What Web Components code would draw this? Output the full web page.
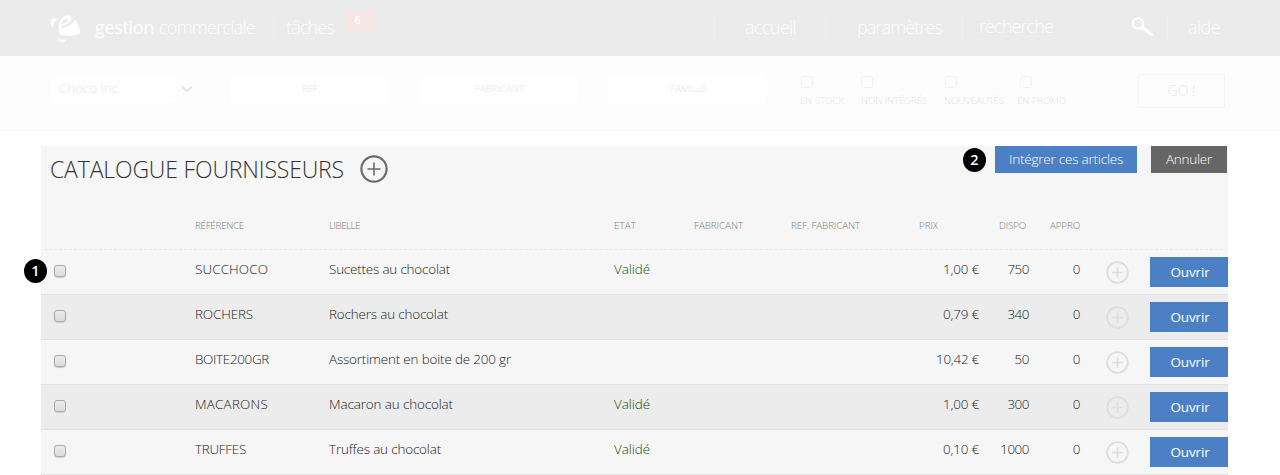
<!DOCTYPE html>
<html lang="fr">
<head>
<meta charset="utf-8">
<title>Catalogue fournisseurs</title>
<style>
html,body{margin:0;height:475px;overflow:hidden;background:#fefefe;font-family:"Open Sans","Noto Sans",sans-serif;font-weight:300}
</style>
</head>
<body>
<catalogue-page></catalogue-page>
<script>
const define = (name, html, ready) => customElements.define(name, class extends HTMLElement {
  connectedCallback() {
    if (this.shadowRoot) return;
    this.attachShadow({mode: 'open'}).innerHTML = typeof html === 'function' ? html(this) : html;
    if (ready) ready(this);
  }
});

// A label whose tracking is adjusted so that it occupies the width in "w".
define('fit-text', '<style>:host{display:block;white-space:pre;width:max-content;line-height:20px}</style><slot></slot>', el => {
  const w = +el.getAttribute('w'), n = [...el.textContent].length;
  if (w) el.style.letterSpacing = ((w - el.getBoundingClientRect().width) / n) + 'px';
});

define('plus-icon', el => `<style>:host{display:block;flex:none}svg{display:block}</style>
<svg width="${el.getAttribute('size')}" height="${el.getAttribute('size')}" viewBox="0 0 28 28" fill="none" stroke="currentColor">
<circle cx="14" cy="14" r="12.6" stroke-width="2.2"/><path d="M14 7.5v13M7.5 14h13" stroke-width="${el.getAttribute('bar') || 1.6}"/></svg>`);

define('check-box', `<style>:host{display:block;box-sizing:border-box;width:12px;height:12px;border:1px solid var(--line,#a9a9a9);border-radius:3px;background:var(--fill,linear-gradient(#ececec,#dcdcdc));box-shadow:var(--drop,0 1px 1px #d0d0d0)}</style>`);

define('step-badge', `<style>:host{position:absolute;width:23px;height:24px;border-radius:50%;background:#000;color:#fff;font-size:14.5px;font-weight:600;line-height:23px;text-align:center}</style><slot></slot>`);

define('action-button', `<style>:host{display:flex;align-items:center;justify-content:center;background:#4b81c4;color:#fff;font-size:13.5px;font-weight:400}</style><slot></slot>`);

define('top-bar', `<style>
:host{display:flex;box-sizing:border-box;height:56px;background:#ebebeb;color:#fdfdfd;font-size:18px;padding:17px 0 0 50px}
svg{display:block;flex:none}
.logo{margin:-3px 14px 0 0}
.g{font-weight:400;margin-right:5px}
i{width:1px;height:24px;background:#f0f0f0;flex:none;margin-top:-1px}
.task{margin:0 9px 0 12px}
.bubble{margin:-6px 343px 0 0}
</style>
<svg class="logo" width="31" height="30" viewBox="0 0 31 30" fill="#fff"><path d="M1 6Q4 3.5 8 4Q3.5 8 2.5 14Q0 10 1 6Z"/><path d="M9 15C9 6 13 1 18.500 1.500C22.500 2 22.500 6.500 17.500 9.500Q14 11.500 11 12.500V14C19 13.500 23.500 10 25 5.500C28 9.500 30 14 30 19C25 22.500 19 22 13.500 21.500C10 21 9 19 9 15ZM11 10.500C15 9.500 19.500 6.500 18 5C15.500 4 12 7 11 10.500Z"/><path d="M8 24.500C11 26 13 26 16.500 25.500C13.500 29 9.500 29.500 8 24.500Z"/></svg>
<fit-text class="g" w="59">gestion</fit-text><fit-text w="96">commerciale</fit-text>
<i style="margin-left:18px"></i><fit-text class="task" w="48">tâches</fit-text>
<svg class="bubble" width="31" height="28" viewBox="0 0 31 28"><path d="M2 1H30V20H19L13 27V20H2Z" fill="#f8e6e6"/><text x="14.500" y="13" text-anchor="middle" fill="#fff" font-size="10.500" font-weight="600">6</text></svg>
<i style="margin-left:-3px"></i><fit-text style="margin-left:30px" w="51">accueil</fit-text>
<i style="margin-left:29px"></i><fit-text style="margin-left:31px" w="85">paramètres</fit-text>
<i style="margin-left:20px"></i><fit-text style="margin:-1px 0 0 16px" w="74">recherche</fit-text>
<svg style="margin:-1px 12px 0 78px" width="24" height="22" viewBox="0 0 24 22" fill="none" stroke="#fff"><circle cx="7" cy="7.500" r="5.200" stroke-width="2.200"/><path d="M7 5.200q2.300.3 2.500 2.200" stroke-width="1"/><path d="M11.500 11.500L20.500 18.500" stroke-width="3" stroke-linecap="round"/></svg>
<i></i><fit-text style="margin-left:20px" w="32">aide</fit-text>`);

define('filter-option', `<style>:host{display:block;--line:#f0f0f0;--fill:#fdfdfd;--drop:none;font-size:9.8px}check-box{margin:0 0 3px var(--shift,1px)}</style><check-box></check-box><slot></slot>`);

define('filter-bar', `<style>
:host{display:flex;align-items:flex-start;box-sizing:border-box;height:75px;padding:19px 0 0 51px;border-bottom:1px solid #fafafa;background:#fdfdfd;color:#e4e4e4}
.select{display:flex;align-items:center;width:148px;height:27px;font-size:13.5px;margin-right:32px}
.select div{width:124px;height:27px;background:#fff;display:flex;align-items:center}
.select div fit-text{margin:-2px 0 0 8px}
.select svg{margin-left:6px}
.in{width:157px;height:28px;background:#fff;display:flex;align-items:center;justify-content:center;font-size:9.8px;margin-right:32px;flex:none}
.in fit-text{margin-left:2px}
.opts{display:grid;grid-template-columns:61px 83px 73px 120px;margin:1px 0 0 2px}
.go{box-sizing:border-box;width:87px;height:34px;border:1px solid #f5f5f5;display:flex;align-items:center;justify-content:center;font-size:14px;margin:-1px 0 0 1px}
</style>
<div class="select"><div><fit-text w="62">Choco Inc.</fit-text></div><svg width="12" height="8" viewBox="0 0 12 8" fill="none" stroke="#e4e4e4" stroke-width="2"><path d="M1 1.500L6 6.200L11 1.500"/></svg></div>
<div class="in"><fit-text w="17">REF.</fit-text></div>
<div class="in"><fit-text w="49">FABRICANT</fit-text></div>
<div class="in"><fit-text w="36">FAMILLE</fit-text></div>
<div class="opts">
<filter-option><fit-text w="44">EN STOCK</fit-text></filter-option>
<filter-option style="--shift:0"><fit-text w="66">NON INTÉGRÉS</fit-text></filter-option>
<filter-option><fit-text w="60">NOUVEAUTÉS</fit-text></filter-option>
<filter-option style="--shift:3px"><fit-text w="49">EN PROMO</fit-text></filter-option>
</div>
<div class="go"><fit-text w="28">GO !</fit-text></div>`);

const columns = '141px 134px 285px 80px 97px 128px 60px 50px 51px 70px 78px';

define('table-head', `<style>
:host{display:grid;grid-template-columns:${columns};padding:10px 0 0 13px;box-sizing:border-box;height:44px;color:#7d7d7d;font-size:9.8px}
.r{justify-self:end}
</style><span></span>
<fit-text w="49">RÉFÉRENCE</fit-text><fit-text w="31">LIBELLE</fit-text><fit-text w="22">ETAT</fit-text><fit-text w="49">FABRICANT</fit-text><fit-text w="69">REF. FABRICANT</fit-text><fit-text w="19">PRIX</fit-text><fit-text style="margin-left:20px" w="27">DISPO</fit-text><fit-text class="r" w="30">APPRO</fit-text>`);

define('article-row', el => {
  const a = n => el.getAttribute(n) || '';
  return `<style>
:host{display:grid;grid-template-columns:${columns};box-sizing:border-box;height:45px;padding-left:13px;border-bottom:1px solid #e3e3e3;color:#222;font-size:13.4px;background:#f6f6f6}
:host(:nth-of-type(even)){background:#ececec}
check-box{margin-top:15px}
fit-text{margin-top:9px}
.state{color:#0b500b}
.r{justify-self:end}
plus-icon{color:#dedede;margin:11px 0 0 26px}
action-button{height:30px;margin-top:7px}
action-button fit-text{margin:0 0 0 2px}
</style>
<check-box></check-box><fit-text w="${a('rw')}">${a('ref')}</fit-text><fit-text w="${a('lw')}">${a('label')}</fit-text>
<fit-text class="state" w="${a('state') ? 36 : 0}">${a('state')}</fit-text><span></span><span></span>
<fit-text class="r" w="${a('pw')}">${a('price')}</fit-text><fit-text class="r" w="${a('stock').length * 7.2}">${a('stock')}</fit-text><fit-text class="r" w="7.2">0</fit-text>
<plus-icon size="23" bar="2"></plus-icon><action-button><fit-text w="39">Ouvrir</fit-text></action-button>`;
});

define('catalogue-panel', `<style>
:host{display:block;position:relative;width:1187px;height:329px;margin:15px 0 0 41px;background:#f6f6f6}
header{display:flex;height:60px}
h1{margin:8px 16px 0 9px;font-size:23px;font-weight:300;color:#333}
h1 fit-text{line-height:30px}
header plus-icon{color:#6c6c6c;margin-top:9px}
header action-button{height:27px}
header action-button fit-text{margin-top:-1px;font-weight:300}
.cancel{background:#666;width:76px;margin:0 1px 0 14px}
.main{width:142px;margin-left:auto}
hr{height:0;border:0;border-top:1px dashed #e9e9e9;margin:-1px 0 0 3px}
</style>
<header><h1><fit-text w="294">CATALOGUE FOURNISSEURS</fit-text></h1><plus-icon size="28"></plus-icon>
<action-button class="main"><fit-text w="114">Intégrer ces articles</fit-text></action-button><action-button class="cancel"><fit-text w="46">Annuler</fit-text></action-button></header>
<table-head></table-head><hr>
<article-row ref="SUCCHOCO" rw="73" label="Sucettes au chocolat" lw="121" state="Validé" price="1,00 €" pw="36" stock="750"></article-row>
<article-row ref="ROCHERS" rw="58" label="Rochers au chocolat" lw="119" price="0,79 €" pw="36" stock="340"></article-row>
<article-row ref="BOITE200GR" rw="74" label="Assortiment en boite de 200 gr" lw="182" price="10,42 €" pw="43" stock="50"></article-row>
<article-row ref="MACARONS" rw="73" label="Macaron au chocolat" lw="124" state="Validé" price="1,00 €" pw="36" stock="300"></article-row>
<article-row ref="TRUFFES" rw="51" label="Truffes au chocolat" lw="112" state="Validé" price="0,10 €" pw="36" stock="1000"></article-row>
<step-badge style="left:-17px;top:113px">1</step-badge><step-badge style="left:922px;top:2px">2</step-badge>`);

define('catalogue-page', `<style>:host{display:block;width:1280px;height:475px;overflow:hidden}</style><top-bar></top-bar><filter-bar></filter-bar><catalogue-panel></catalogue-panel>`);
</script>
</body>
</html>
